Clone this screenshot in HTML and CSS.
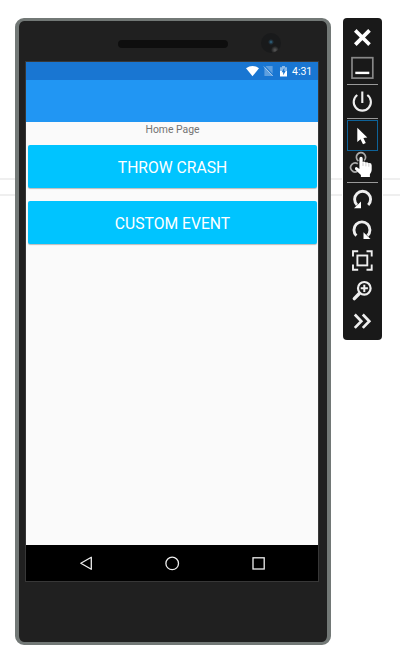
FILE: index.html
```html
<!DOCTYPE html>
<html lang="en">
<head>
<meta charset="utf-8">
<title>Home Page</title>
<link rel="stylesheet" href="styles.css">
</head>
<body>
<main class="emulator">
  <section class="phone">
    <div class="phone-top">
      <div class="speaker"></div>
      <div class="camera"></div>
    </div>
    <div class="screen">
      <div class="status-bar">
        <svg width="50" height="18" viewBox="245 62 50 18">
          <path d="M246 68.300Q252.500 63.500 259 68.300L252.500 76.200Z" fill="#fff"/>
          <path d="M266.200 66H272.600V76H264.400V68Z" fill="#fff" opacity=".3"/>
          <path d="M264.600 66.200L273.600 75.600" stroke="#1976d2" stroke-width="1.200"/>
          <path d="M263.800 66.500L272.800 76" stroke="#fff" stroke-width="1" opacity=".5"/>
          <path d="M280 67.200H282V66H285V67.200H287V71H280Z" fill="#fff" opacity=".5"/>
          <path d="M280 71H287V76.500H280Z" fill="#fff"/>
          <path d="M284.300 67.800L281.600 72.200H283.200V75.200L285.700 71H284.300Z" fill="#1976d2"/>
        </svg>
        <span class="clock">4:31</span>
      </div>
      <div class="app-bar"></div>
      <div class="content">
        <p class="title">Home Page</p>
        <button class="action">THROW CRASH</button>
        <button class="action">CUSTOM EVENT</button>
      </div>
      <nav class="nav-bar">
        <svg width="292" height="36" viewBox="26 545 292 36" fill="none" stroke="#eee" stroke-width="1.300">
          <path d="M91.300 557.300V569.300L80.800 563.300Z" stroke-linejoin="round"/>
          <circle cx="172.200" cy="563.400" r="6.300"/>
          <rect x="253" y="557.800" width="11.200" height="11.200"/>
        </svg>
      </nav>
    </div>
  </section>
  <aside class="toolbar">
    <svg width="31" height="30" viewBox="347 22 31 30"><path d="M356.600 31.700L368.200 43.300M368.200 31.700L356.600 43.300" stroke="#fff" stroke-width="3.700" stroke-linecap="square"/></svg>
    <svg width="31" height="32" viewBox="347 52 31 32"><rect x="352" y="57.700" width="20.800" height="20.400" fill="none" stroke="#888" stroke-width="1.700"/><path d="M355.300 72.900H369.300" stroke="#fff" stroke-width="2.400"/></svg>
    <hr>
    <svg width="31" height="33" viewBox="347 85 31 33" fill="none" stroke="#eee" stroke-width="2.100"><path d="M357.300 95A8.600 8.600 0 1 0 367.300 95M362.300 91.500V103"/></svg>
    <hr>
    <div class="selected"><svg width="29" height="29" viewBox="348 121 29 29"><path d="M357.300 127.700V142L360.500 139.200L363 144.300L365.800 142.900L363.400 138L367.300 137.500Z" fill="#fff"/></svg></div>
    <svg width="31" height="31" viewBox="347 151 31 31"><g fill="none" stroke="#aaa" stroke-width="1.700"><path d="M358.400 161A4.600 4.600 0 1 1 364.200 160.500"/><path d="M357.800 163.800A4.500 4.500 0 1 0 357.500 171.300"/></g><path d="M359.400 158.500Q359.400 156.800 361 156.800Q362.700 156.800 362.700 158.500V162Q364.200 160.900 365.700 162.500Q367.400 161.500 368.700 163.200Q371.700 162.700 371.700 165.500V170Q371.500 172.700 369.900 174.300V176.900H360.900V175L354.900 169.300Q354.600 167 356.600 167L359.400 169Z" fill="#fff"/><path d="M363 162.500V166M365.900 163V166.300M368.800 163.700V166.700" stroke="#999" stroke-width=".5"/></svg>
    <hr>
    <svg width="31" height="32" viewBox="347 183 31 32"><path d="M357 205A8 8 0 1 1 368.200 205" fill="none" stroke="#eee" stroke-width="2.900"/><path d="M354 208.200H361V201.400Z" fill="#fff"/></svg>
    <svg width="31" height="30" viewBox="347 215 31 30"><path d="M367.500 235.600A8 8 0 1 0 356.400 235.600" fill="none" stroke="#eee" stroke-width="2.900"/><path d="M370.500 239H363.500V232.200Z" fill="#fff"/></svg>
    <svg width="31" height="31" viewBox="347 245 31 31" fill="none" stroke="#eee" stroke-width="1.900"><path d="M353 256.500V251.300H358.200M366.500 251.300H371.700V256.500M371.700 264.500V269.700H366.500M358.200 269.700H353V264.500"/><rect x="357.400" y="255.500" width="9.900" height="9.900"/></svg>
    <svg width="31" height="30" viewBox="347 276 31 30" fill="none" stroke="#eee"><circle cx="364.300" cy="288.300" r="6.300" stroke-width="2.200"/><path d="M364.300 284.700V291.900M360.700 288.300H367.900" stroke-width="2"/><path d="M359.300 293.500L354.300 298.600" stroke-width="3.400" stroke-linecap="round"/></svg>
    <svg width="31" height="30" viewBox="347 306 31 30" fill="none" stroke="#eee" stroke-width="2.700"><path d="M354.800 314.500L361.300 321.200L354.800 327.900M362.800 314.500L369.300 321.200L362.800 327.900"/></svg>
  </aside>
</main>
</body>
</html>
```
FILE: styles.css
```css
* { box-sizing: border-box; }
body {
  margin: 0;
  height: 656px;
  overflow: hidden;
  font-family: Roboto, sans-serif;
  background: linear-gradient(#efefef, #efefef) 0 178px / 100% 2px no-repeat,
    linear-gradient(#efefef, #efefef) 0 194px / 100% 2px no-repeat, #fff;
}
svg { display: block; flex: none; }
.emulator {
  display: flex;
  align-items: flex-start;
  gap: 12px;
  padding: 18px 0 0 15px;
}
.phone {
  width: 316px;
  height: 627px;
  border: solid #727876;
  border-width: 3px 4px;
  border-radius: 9px;
  background: #202020;
}
.phone-top {
  display: flex;
  height: 40px;
  padding: 11px 0 0 99px;
}
.speaker {
  width: 110px;
  height: 8px;
  margin-top: 8px;
  border-radius: 4px;
  background: #0e0e0e;
}
.camera {
  width: 20px;
  height: 20px;
  margin: 1px 0 0 33px;
  border-radius: 50%;
  background: radial-gradient(circle at 10px 9px, #3c81a6 0, #254457 1px, transparent 3px),
    radial-gradient(circle at 14px 17px, #5a5a5a 0, transparent 4px), #191a1b;
}
.screen {
  display: flex;
  flex-direction: column;
  width: 294px;
  height: 521px;
  margin-left: 6px;
  border: 1px solid #373737;
  background: #fafafa;
}
.status-bar {
  display: flex;
  align-items: center;
  height: 18px;
  padding-left: 219px;
  background: #1976d2;
}
.clock {
  margin-left: -3px;
  font-size: 10.500px;
  line-height: 18px;
  padding-top: 1px;
  color: #fff;
}
.app-bar {
  height: 42px;
  background: #2196f3;
}
.content {
  display: flex;
  flex: 1;
  flex-direction: column;
  padding: 0 1px 0 2px;
}
.title {
  margin: 0 0 8px;
  font-size: 10.400px;
  line-height: 15px;
  text-align: center;
  color: #737373;
}
.action {
  height: 43px;
  margin: 0 0 13px;
  padding: 2px 0 0;
  border: 0;
  border-radius: 2px;
  box-shadow: 0 1px 1px #bbb;
  background: #00c4ff;
  font: 15.700px/41px Roboto, sans-serif;
  color: #fff;
}
.nav-bar { height: 36px; background: #000; }
.toolbar {
  display: flex;
  flex-direction: column;
  align-items: center;
  width: 39px;
  height: 322px;
  padding-top: 4px;
  border-radius: 4px;
  background: #191919;
  box-shadow: 0 0 0 1px #fff;
}
.toolbar hr {
  width: 31px;
  height: 1px;
  margin: 0;
  border: 0;
  background: #999;
}
.selected {
  width: 31px;
  height: 31px;
  margin-top: 1px;
  border: 1px solid #0e6298;
}
```
